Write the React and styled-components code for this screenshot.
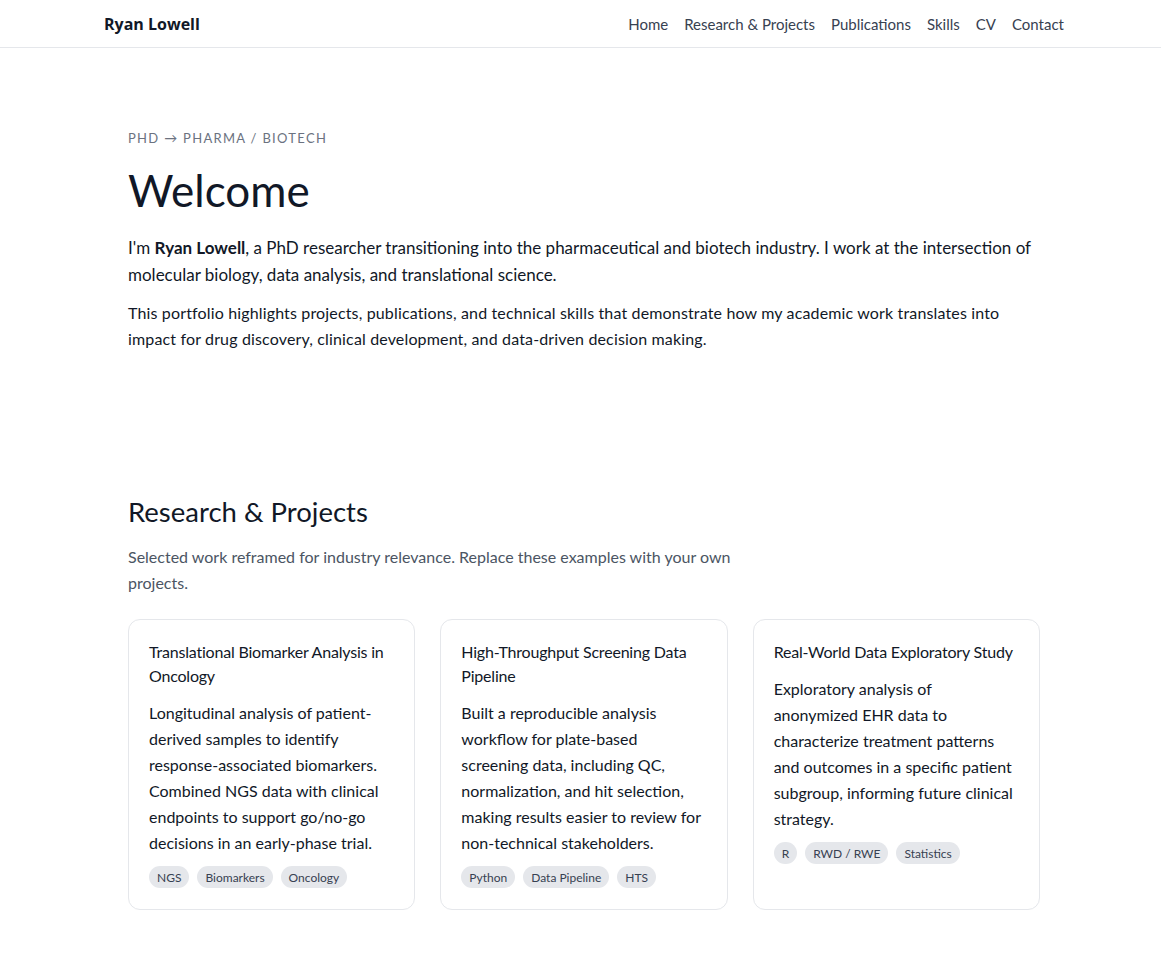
import React from 'react';
import styled, { createGlobalStyle } from 'styled-components';

const GlobalStyle = createGlobalStyle`
  * { box-sizing: border-box; }
  body {
    margin: 0;
    background: #ffffff;
    color: #111827;
    font-family: Lato, "Open Sans", sans-serif;
  }
`;

const Header = styled.header`
  border-bottom: 1px solid #e5e7eb;
  height: 48px;
`;

const HeaderInner = styled.div`
  height: 100%;
  display: flex;
  align-items: center;
  justify-content: space-between;
  padding: 0 97px 0 104px;
`;

const Brand = styled.div`
  font-family: "Open Sans", Lato, sans-serif;
  font-weight: 700;
  font-size: 16px;
  color: #111827;
`;

const Nav = styled.nav`
  display: flex;
  gap: 16px;
`;

const NavLink = styled.a`
  font-size: 15px;
  color: #374151;
  text-decoration: none;
`;

const Main = styled.main`
  width: 960px;
  margin-left: 104px;
  padding: 0 24px;
`;

const Hero = styled.section`
  padding: 81px 0 63px;
`;

const Eyebrow = styled.div`
  font-size: 13px;
  line-height: 18px;
  letter-spacing: 0.1em;
  text-transform: uppercase;
  color: #6b7280;
  margin-bottom: 14px;
`;

const Title = styled.h1`
  margin: 0 0 15px;
  font-size: 44px;
  font-weight: 400;
  line-height: 58px;
  color: #111827;
`;

const Lead = styled.p`
  margin: 0 0 12px;
  font-size: ${(p) => (p.$large ? '17px' : '16px')};
  line-height: ${(p) => (p.$large ? '27px' : '26px')};
  letter-spacing: ${(p) => (p.$large ? '0' : '0.15px')};
  color: #111827;
  max-width: 912px;
`;

const Section = styled.section`
  padding: 68px 0 60px;
`;

const SectionTitle = styled.h2`
  margin: 0 0 15px;
  font-size: 27.5px;
  font-weight: 400;
  line-height: 34px;
`;

const SectionLead = styled.p`
  margin: 0 0 23px;
  max-width: 620px;
  font-size: 16px;
  line-height: 26px;
  color: #4b5563;
`;

const CardGrid = styled.div`
  display: grid;
  grid-template-columns: repeat(3, 1fr);
  gap: 25px;
`;

const Card = styled.article`
  border: 1px solid #e5e7eb;
  border-radius: 12px;
  padding: 20px 20px 21px;
  display: flex;
  flex-direction: column;
`;

const CardTitle = styled.h3`
  margin: 0 0 12px;
  font-size: 16px;
  font-weight: 400;
  line-height: 24px;
  letter-spacing: -0.2px;
  color: #111827;
`;

const CardText = styled.p`
  margin: 0 0 10px;
  font-size: 16px;
  line-height: 26px;
  color: #111827;
`;

const Tags = styled.div`
  display: flex;
  flex-wrap: wrap;
  gap: 8px;
`;

const Tag = styled.span`
  display: inline-flex;
  align-items: center;
  height: 22px;
  padding: 0 8px;
  border-radius: 999px;
  background: #e5e7eb;
  color: #374151;
  font-size: 12px;
`;

const projects = [
  {
    title: 'Translational Biomarker Analysis in Oncology',
    text: 'Longitudinal analysis of patient-derived samples to identify response-associated biomarkers. Combined NGS data with clinical endpoints to support go/no-go decisions in an early-phase trial.',
    tags: ['NGS', 'Biomarkers', 'Oncology'],
  },
  {
    title: 'High-Throughput Screening Data Pipeline',
    text: 'Built a reproducible analysis workflow for plate-based screening data, including QC, normalization, and hit selection, making results easier to review for non-technical stakeholders.',
    tags: ['Python', 'Data Pipeline', 'HTS'],
  },
  {
    title: 'Real-World Data Exploratory Study',
    text: 'Exploratory analysis of anonymized EHR data to characterize treatment patterns and outcomes in a specific patient subgroup, informing future clinical strategy.',
    tags: ['R', 'RWD / RWE', 'Statistics'],
  },
];

const navItems = ['Home', 'Research & Projects', 'Publications', 'Skills', 'CV', 'Contact'];

const App = () => (
  <>
    <GlobalStyle />
    <Header>
      <HeaderInner>
        <Brand>Ryan Lowell</Brand>
        <Nav>
          {navItems.map((item) => (
            <NavLink key={item} href="#">{item}</NavLink>
          ))}
        </Nav>
      </HeaderInner>
    </Header>
    <Main>
      <Hero>
        <Eyebrow>PhD → Pharma / Biotech</Eyebrow>
        <Title>Welcome</Title>
        <Lead $large>
          I'm <strong>Ryan Lowell</strong>, a PhD researcher transitioning into the pharmaceutical and biotech
          industry. I work at the intersection of molecular biology, data analysis, and translational science.
        </Lead>
        <Lead>
          This portfolio highlights projects, publications, and technical skills that demonstrate how my academic
          work translates into impact for drug discovery, clinical development, and data-driven decision making.
        </Lead>
      </Hero>
      <Section>
        <SectionTitle>Research &amp; Projects</SectionTitle>
        <SectionLead>
          Selected work reframed for industry relevance. Replace these examples with your own projects.
        </SectionLead>
        <CardGrid>
          {projects.map((p) => (
            <Card key={p.title}>
              <CardTitle>{p.title}</CardTitle>
              <CardText>{p.text}</CardText>
              <Tags>
                {p.tags.map((t) => (
                  <Tag key={t}>{t}</Tag>
                ))}
              </Tags>
            </Card>
          ))}
        </CardGrid>
      </Section>
    </Main>
  </>
);

export default App;
